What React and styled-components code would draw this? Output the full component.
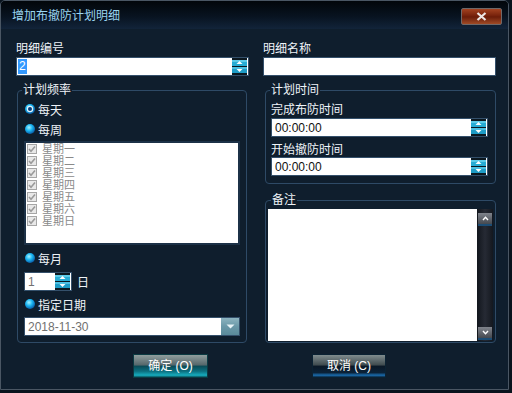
import React from 'react';
import styled, { createGlobalStyle } from 'styled-components';

const Global = createGlobalStyle`
  html, body { margin: 0; padding: 0; background: #09131d; }
  body { font-family: "Liberation Sans", "Noto Sans CJK SC", sans-serif; font-size: 12px; }
  * { box-sizing: border-box; }
`;

const Window = styled.div`
  width: 509px;
  height: 390px;
  border: 1px solid #4a5663;
  border-radius: 5px 5px 0 0;
  background: #0f1e2d;
  display: flex;
  flex-direction: column;
  overflow: hidden;
`;

const TitleBar = styled.div`
  height: 28px;
  flex: none;
  display: flex;
  align-items: center;
  justify-content: space-between;
  padding: 0 6px 0 11px;
  background: linear-gradient(#02060a, #081320 55%, #12243a);
`;

const Title = styled.div`
  color: #9ad4f0;
  line-height: 14px;
  padding-top: 1px;
`;

const CloseButton = styled.div`
  width: 41px;
  height: 17px;
  margin-top: 2px;
  border: 1px solid #6f6868;
  border-radius: 2px;
  background: linear-gradient(#a34220, #74200a 48%, #6a1c08 52%, #a04a26);
  display: flex;
  align-items: center;
  justify-content: center;
`;

const Content = styled.div`
  display: grid;
  grid-template-columns: 233px 233px;
  column-gap: 14px;
  align-items: start;
  padding: 13px 0 0 15px;
`;

const Column = styled.div`
  display: flex;
  flex-direction: column;
`;

const Label = styled.div`
  color: #eef3f8;
  height: 14px;
  line-height: 14px;
  margin-top: ${p => p.$mt || 0}px;
`;

const Field = styled.div`
  margin-top: ${p => p.$mt ?? 1}px;
  width: ${p => p.$w || '100%'};
  height: 19px;
  flex: none;
  background: #fff;
  border: 1px solid #34506b;
  display: flex;
  align-items: center;
  justify-content: space-between;
  padding: 0 1px 0 ${p => p.$pl ?? 3}px;
  color: ${p => (p.$muted ? '#707070' : '#111')};
  line-height: 14px;
`;

const Selected = styled.span`
  background: #3399ff;
  color: #fff;
  padding: 0 1px;
  line-height: 15px;
`;

const Group = styled.fieldset`
  margin: ${p => p.$mt}px ${p => p.$mr}px 0 ${p => p.$ml}px;
  border: 1px solid #2e4a66;
  border-radius: 4px;
  padding: ${p => p.$pad};
  min-width: 0;
`;

const Legend = styled.legend`
  color: #eef3f8;
  line-height: 14px;
  padding: 0 1px;
  margin-left: ${p => p.$x}px;
`;

const RadioRow = styled.div`
  height: 20px;
  display: flex;
  align-items: center;
  gap: 3px;
  padding-left: 1px;
  margin-top: ${p => p.$mt || 0}px;
  color: #eef3f8;
`;

const ListBox = styled.div`
  margin-top: 2px;
  height: 104px;
  background: #fff;
  border: 2px solid #1c3147;
  padding: 0 1px;
`;

const ListItem = styled.div`
  height: 12px;
  line-height: 12px;
  font-size: 11px;
  display: flex;
  align-items: center;
  gap: 5px;
  color: #8a8a8a;
`;

const InlineRow = styled.div`
  margin-top: 4px;
  display: flex;
  align-items: center;
  gap: 5px;
  color: #eef3f8;
`;

const DropButton = styled.div`
  width: 18px;
  height: 17px;
  margin-right: -1px;
  background: linear-gradient(#8db4c0, #6a98a8 50%, #5a8a9a);
  display: flex;
  align-items: center;
  justify-content: center;
`;

const NotesBox = styled.div`
  display: flex;
  height: 132px;
`;

const NotesArea = styled.div`
  flex: 1;
  background: #fff;
`;

const ScrollBar = styled.div`
  width: 16px;
  display: flex;
  flex-direction: column;
  justify-content: space-between;
  padding: 4px 1px 3px;
  background: linear-gradient(to right, #12161d, #262a34 50%, #14181f);
`;

const ScrollButton = styled.div`
  height: 11px;
  background: linear-gradient(#80848c, #44484f);
  box-shadow: 0 2px 0 #1b4c74;
  display: flex;
  align-items: center;
  justify-content: center;
`;

const ButtonRow = styled.div`
  display: flex;
  gap: 104px;
  padding-left: 132px;
  margin-top: 11px;
`;

const Button = styled.div`
  width: ${p => p.$w}px;
  height: 24px;
  border: 1px solid ${p => (p.$primary ? '#0b3a42' : '#0b2233')};
  color: #fff;
  display: flex;
  align-items: center;
  justify-content: center;
  line-height: 14px;
  background: ${p =>
    p.$primary
      ? 'linear-gradient(#909e9e, #55666a 46%, #0a4a56 50%, #0c7080 74%, #17adbe 92%, #0a5560)'
      : 'linear-gradient(#808c8e, #3e4a4e 46%, #0a1826 50%, #0b2238 80%, #1a6cae 92%, #0b2a44)'};
`;

const Spin = () => (
  <svg width="15" height="17" viewBox="0 0 15 17">
    <rect width="15" height="17" fill="#0b1820" />
    <rect x="0" y="2" width="15" height="6" fill="#27acd4" />
    <rect x="0" y="2" width="15" height="2" fill="#5ccbe8" />
    <rect x="0" y="9" width="15" height="6" fill="#1e9cc6" />
    <rect x="0" y="9" width="15" height="2" fill="#4cc0e2" />
    <path d="M7.5 3 L10.5 6 H4.5 Z" fill="#fff" />
    <path d="M4.5 11 H10.5 L7.5 14 Z" fill="#fff" />
  </svg>
);

const Radio = ({ checked }) => (
  <svg width="10" height="10" viewBox="0 0 10 10">
    <defs>
      <radialGradient id="radioGrad" cx="40%" cy="35%" r="65%">
        <stop offset="0" stopColor="#a8f2ff" />
        <stop offset="0.5" stopColor="#1ab6f2" />
        <stop offset="1" stopColor="#0a5ea8" />
      </radialGradient>
    </defs>
    <circle cx="5" cy="5" r="5" fill="url(#radioGrad)" />
    {checked && (
      <>
        <circle cx="5" cy="5" r="3.2" fill="#dcf4ff" />
        <circle cx="5" cy="5" r="2" fill="#0a3c78" />
      </>
    )}
  </svg>
);

const Check = () => (
  <svg width="10" height="10" viewBox="0 0 10 10">
    <rect x="0.5" y="0.5" width="9" height="9" fill="#e8e8e8" stroke="#a6a6a6" />
    <path d="M2 5 L4 7.2 L8 2.6" fill="none" stroke="#9a9a9a" strokeWidth="1.6" />
  </svg>
);

const CloseIcon = () => (
  <svg width="11" height="9" viewBox="0 0 11 9">
    <path d="M1.5 1 L9.5 8 M9.5 1 L1.5 8" stroke="#ece6e4" strokeWidth="2.2" />
  </svg>
);

const Chevron = ({ down }) => (
  <svg width="7" height="5" viewBox="0 0 7 5">
    <path d={down ? 'M1 1 L3.5 3.8 L6 1' : 'M1 4 L3.5 1.2 L6 4'} fill="none" stroke="#fff" strokeWidth="1.4" />
  </svg>
);

const DropArrow = () => (
  <svg width="9" height="5" viewBox="0 0 9 5">
    <path d="M0.5 0.5 H8.5 L4.5 4.5 Z" fill="#e8f4f8" />
  </svg>
);

const days = ['星期一', '星期二', '星期三', '星期四', '星期五', '星期六', '星期日'];

export default function App() {
  return (
    <>
      <Global />
      <Window>
        <TitleBar>
          <Title>增加布撤防计划明细</Title>
          <CloseButton>
            <CloseIcon />
          </CloseButton>
        </TitleBar>
        <Content>
          <Column>
            <Label>明细编号</Label>
            <Field $pl={1}>
              <Selected>2</Selected>
              <Spin />
            </Field>
            <Group $mt={7} $ml={1} $mr={2} $pad="2px 6px 6px 6px">
              <Legend $x={-2}>计划频率</Legend>
              <RadioRow>
                <Radio checked />
                每天
              </RadioRow>
              <RadioRow>
                <Radio />
                每周
              </RadioRow>
              <ListBox>
                {days.map(d => (
                  <ListItem key={d}>
                    <Check />
                    {d}
                  </ListItem>
                ))}
              </ListBox>
              <RadioRow $mt={3}>
                <Radio />
                每月
              </RadioRow>
              <InlineRow>
                <Field $w="48px" $mt={0} $muted>
                  1
                  <Spin />
                </Field>
                日
              </InlineRow>
              <RadioRow $mt={3}>
                <Radio />
                指定日期
              </RadioRow>
              <Field $mt={3} $muted>
                2018-11-30
                <DropButton>
                  <DropArrow />
                </DropButton>
              </Field>
            </Group>
          </Column>
          <Column>
            <Label>明细名称</Label>
            <Field />
            <Group $mt={7} $ml={2} $mr={0} $pad="0 7px 7px 5px">
              <Legend $x={-1}>计划时间</Legend>
              <Label $mt={6}>完成布防时间</Label>
              <Field>
                00:00:00
                <Spin />
              </Field>
              <Label $mt={6}>开始撤防时间</Label>
              <Field $mt={0}>
                00:00:00
                <Spin />
              </Field>
            </Group>
            <Group $mt={9} $ml={2} $mr={0} $pad="2px 2px 1px 2px">
              <Legend $x={3}>备注</Legend>
              <NotesBox>
                <NotesArea />
                <ScrollBar>
                  <ScrollButton>
                    <Chevron />
                  </ScrollButton>
                  <ScrollButton>
                    <Chevron down />
                  </ScrollButton>
                </ScrollBar>
              </NotesBox>
            </Group>
          </Column>
        </Content>
        <ButtonRow>
          <Button $w={75} $primary>确定 (O)</Button>
          <Button $w={74}>取消 (C)</Button>
        </ButtonRow>
      </Window>
    </>
  );
}
